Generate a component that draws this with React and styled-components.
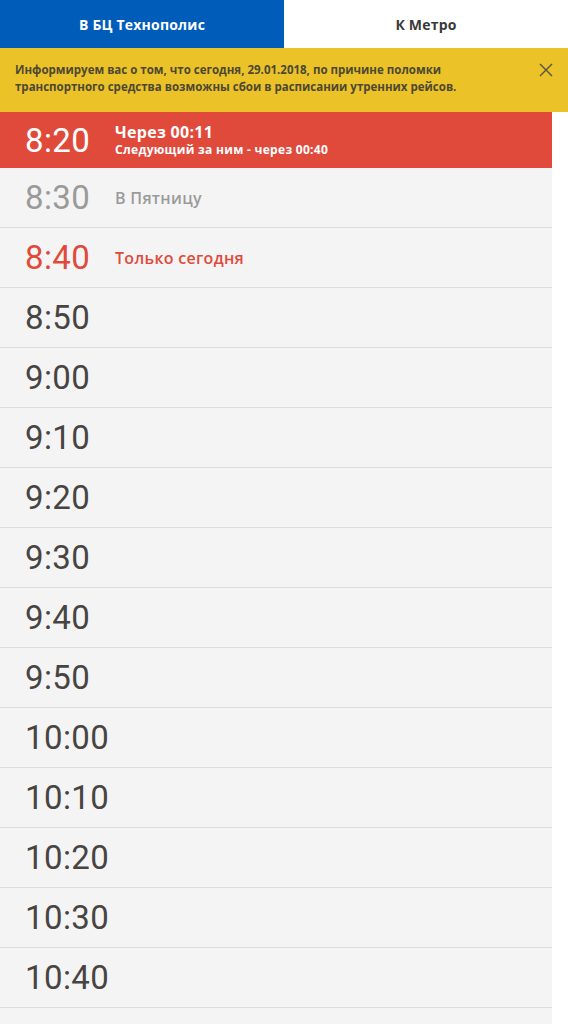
import React from 'react';
import styled, { createGlobalStyle } from 'styled-components';

const GlobalStyle = createGlobalStyle`
  body {
    margin: 0;
    background: #ffffff;
    font-family: Roboto, "Noto Sans", sans-serif;
  }
`;

const TIMES = [
  { time: '8:20', kind: 'next', title: 'Через 00:11', sub: 'Следующий за ним - через 00:40' },
  { time: '8:30', kind: 'muted', title: 'В Пятницу' },
  { time: '8:40', kind: 'today', title: 'Только сегодня' },
  { time: '8:50' },
  { time: '9:00' },
  { time: '9:10' },
  { time: '9:20' },
  { time: '9:30' },
  { time: '9:40' },
  { time: '9:50' },
  { time: '10:00' },
  { time: '10:10' },
  { time: '10:20' },
  { time: '10:30' },
  { time: '10:40' },
];

const CloseIcon = () => (
  <svg width="14" height="14" viewBox="0 0 14 14">
    <path d="M1 1 L13 13 M13 1 L1 13" stroke="#555049" strokeWidth="1.4" fill="none" />
  </svg>
);

const App = () => {
  return (
    <Page>
      <GlobalStyle />
      <Tabs>
        <Tab active>В БЦ Технополис</Tab>
        <Tab>К Метро</Tab>
      </Tabs>
      <Notice>
        <NoticeText>
          Информируем вас о том, что сегодня, 29.01.2018, по причине поломки
          транспортного средства возможны сбои в расписании утренних рейсов.
        </NoticeText>
        <CloseButton><CloseIcon /></CloseButton>
      </Notice>
      <List>
        {TIMES.map((item) => (
          <Row key={ item.time } kind={ item.kind }>
            <Time kind={ item.kind }>{ item.time }</Time>
            { item.title &&
              <Info>
                <Title kind={ item.kind }>{ item.title }</Title>
                { item.sub && <Sub>{ item.sub }</Sub> }
              </Info>
            }
          </Row>
        ))}
      </List>
    </Page>
  );
};

export default App;

const Page = styled.div`
  display: flex;
  flex-direction: column;
  width: 568px;
  height: 1024px;
  overflow: hidden;
`;

const Tabs = styled.div`
  display: flex;
  height: 48px;
  flex-shrink: 0;
`;

const Tab = styled.div`
  flex: 1;
  display: flex;
  align-items: center;
  justify-content: center;
  font-family: "Open Sans", "Noto Sans", sans-serif;
  font-size: 14px;
  font-weight: 700;
  letter-spacing: 0.2px;
  background: ${ (p) => p.active ? '#005cb9' : '#ffffff' };
  color: ${ (p) => p.active ? '#ffffff' : '#3a3a3a' };
`;

const Notice = styled.div`
  display: flex;
  flex-shrink: 0;
  align-items: flex-start;
  justify-content: space-between;
  height: 64px;
  box-sizing: border-box;
  padding: 13px 15px 0 15px;
  background: #ebc228;
`;

const NoticeText = styled.div`
  font-family: "Open Sans", "Noto Sans", sans-serif;
  font-size: 11.5px;
  font-weight: 700;
  line-height: 17px;
  color: #4d4834;
  width: 480px;
`;

const CloseButton = styled.div`
  margin-top: 2px;
  line-height: 0;
`;

const List = styled.div`
  flex: 1;
  width: 552px;
  background: #f4f4f4;
`;

const Row = styled.div`
  display: flex;
  align-items: center;
  height: ${ (p) => p.kind === 'next' ? '56px' : '59px' };
  padding-left: 25px;
  background: ${ (p) => p.kind === 'next' ? '#e04a3b' : '#f4f4f4' };
  border-bottom: ${ (p) => p.kind === 'next' ? 'none' : '1px solid #dcdcdc' };
`;

const timeColor = {
  next: '#ffffff',
  muted: '#9a9a9a',
  today: '#e04a3b',
};

const Time = styled.div`
  width: 90px;
  font-size: 33px;
  font-weight: 400;
  letter-spacing: 0.4px;
  color: ${ (p) => timeColor[p.kind] || '#474442' };
`;

const Info = styled.div`
  display: flex;
  flex-direction: column;
  font-family: "Open Sans", "Noto Sans", sans-serif;
  font-weight: 600;
`;

const Title = styled.div`
  font-size: 16px;
  line-height: 22px;
  letter-spacing: 0.3px;
  color: ${ (p) => timeColor[p.kind] || '#474442' };
  ${ (p) => p.kind === 'next' ? 'font-weight: 700; margin-top: -2px;' : 'margin-top: 1px;' }
`;

const Sub = styled.div`
  font-size: 12px;
  line-height: 17px;
  margin-top: -2px;
  font-weight: 700;
  letter-spacing: 0.3px;
  color: #ffffff;
`;
